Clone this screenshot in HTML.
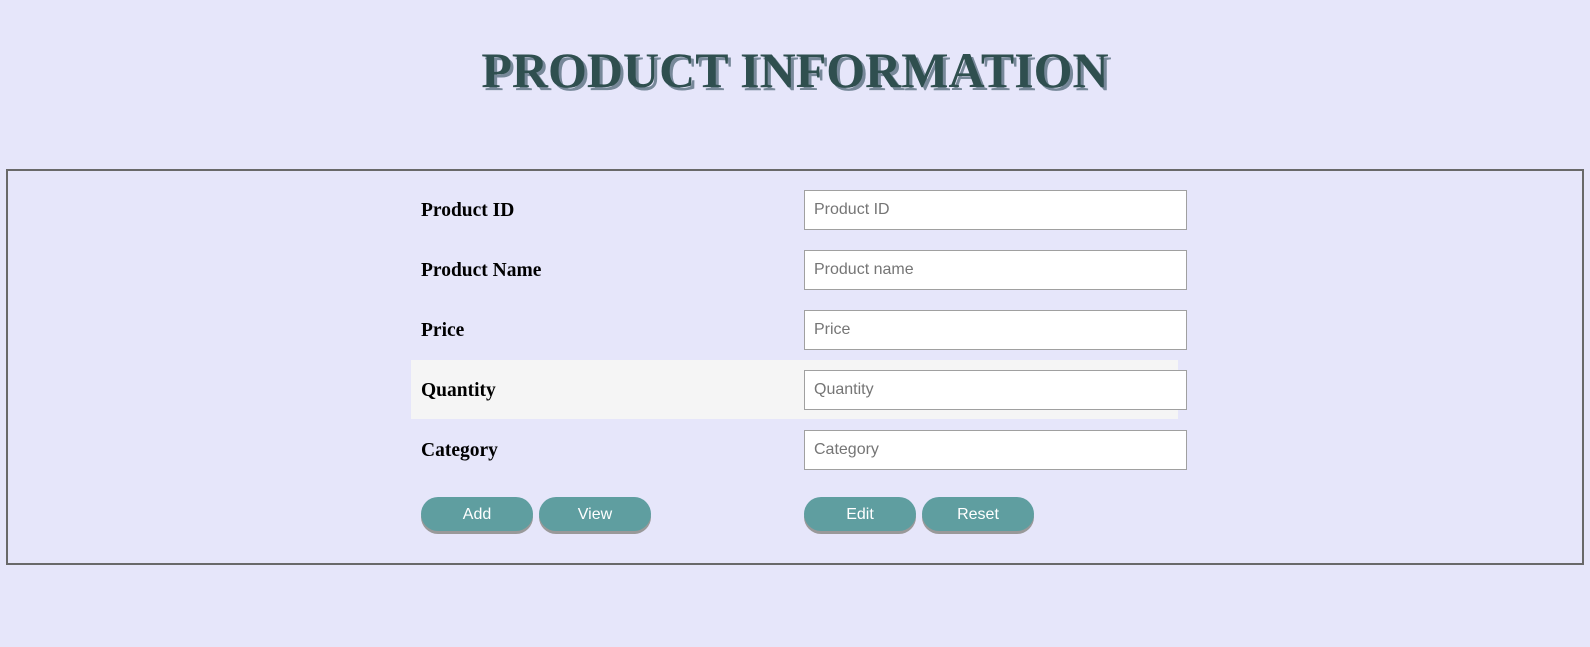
<!DOCTYPE html>
<html><head><style>
html,body{margin:0;padding:0;background:#e6e6fa;width:1590px;height:647px;overflow:hidden;position:relative;font-family:"Liberation Serif",serif}
h1{position:absolute;left:0;width:1590px;top:40px;margin:0;text-align:center;font-size:50px;font-weight:bold;color:#2f4f4f;text-shadow:3px 3px 0 #778899;line-height:60px}
.box{position:absolute;left:6px;top:169px;width:1574px;height:392px;border:2px solid #696969}
.hl{position:absolute;left:411px;top:360px;width:767px;height:59px;background:#f5f5f5}
.lbl{position:absolute;left:421px;font-size:19.5px;font-weight:bold;color:#000}
.in{position:absolute;left:804px;height:38px;background:#fff;border:1px solid #a0a0a0;font-family:"Liberation Sans",sans-serif;font-size:16px;color:#757575;line-height:38px;padding-left:9px;box-sizing:content-box;width:372px}
.btn{position:absolute;top:497px;height:34px;width:112px;background:#5f9ea0;border-radius:17px;box-shadow:0 3px 0 #999;color:#fff;font-family:"Liberation Sans",sans-serif;font-size:16px;text-align:center;line-height:35px}
</style></head><body>
<h1>PRODUCT INFORMATION</h1>
<div class="box"></div>
<div class="hl"></div>
<div class="lbl" style="top:200px">Product ID</div>
<div class="lbl" style="top:260px">Product Name</div>
<div class="lbl" style="top:320px">Price</div>
<div class="lbl" style="top:380px">Quantity</div>
<div class="lbl" style="top:440px">Category</div>
<div class="in" style="top:190px">Product ID</div>
<div class="in" style="top:250px">Product name</div>
<div class="in" style="top:310px">Price</div>
<div class="in" style="top:370px">Quantity</div>
<div class="in" style="top:430px">Category</div>
<div class="btn" style="left:421px">Add</div>
<div class="btn" style="left:539px">View</div>
<div class="btn" style="left:804px">Edit</div>
<div class="btn" style="left:922px">Reset</div>
</body></html>
